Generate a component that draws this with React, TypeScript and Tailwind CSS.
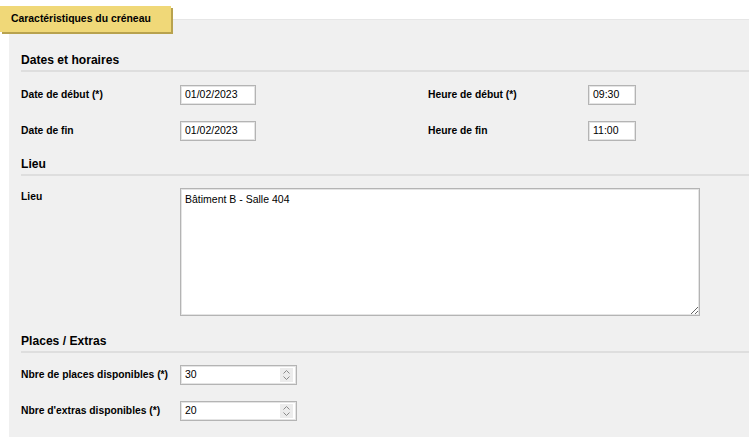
import React from "react";

const font = { fontFamily: '"Liberation Sans", Arial, sans-serif' };

function TextInput({ value, w }: { value: string; w: string }) {
  return (
    <div
      className={`${w} h-[20px] bg-white border border-[#b4b4b4] shadow-[inset_0_0_0_1px_#e4e4e4] flex items-center pl-[4px] text-[10.5px] text-black`}
    >
      {value}
    </div>
  );
}

function NumberInput({ value }: { value: string }) {
  return (
    <div className="w-[117px] h-[20px] bg-white border border-[#b4b4b4] shadow-[inset_0_0_0_1px_#e4e4e4] flex items-center pl-[4px] pr-[3px] text-[10.5px] text-black">
      <span className="flex-1">{value}</span>
      <div className="w-[13px] h-[14px] bg-[#ececec] flex items-center justify-center">
        <svg width="9" height="12" viewBox="0 0 9 12" fill="none" stroke="#8a8a8a" strokeWidth="1">
          <path d="M1.5 4.5 L4.5 1.5 L7.5 4.5" />
          <path d="M1.5 7.5 L4.5 10.5 L7.5 7.5" />
        </svg>
      </div>
    </div>
  );
}

function SectionHeader({ title, mt }: { title: string; mt: string }) {
  return (
    <div className={`${mt} border-b-2 border-[#dedede] pb-[1px]`}>
      <div className="text-[12.1px] font-bold leading-[18px] text-black">{title}</div>
    </div>
  );
}

function Label({ children, w }: { children: React.ReactNode; w: string }) {
  return <div className={`${w} shrink-0 text-[10.3px] font-bold text-black leading-[18px]`}>{children}</div>;
}

export default function App() {
  return (
    <div className="relative w-[750px] h-[440px] bg-white overflow-hidden" style={font}>
      <div className="absolute left-0 top-[6px] w-[171px] h-[26px] bg-[#f0d878] shadow-[2px_2px_0_#b8a24e] flex items-center pl-[11px] text-[10.4px] font-bold text-black z-10">
        Caractéristiques du créneau
      </div>
      <div className="ml-[9px] mt-[19px] w-[740px] h-[418px] bg-[#f0f0f0] border-t border-[#e6e6e6] pl-[12px]">
        <SectionHeader title="Dates et horaires" mt="mt-[31px]" />
        <div className="mt-[13px] flex flex-col gap-[16px]">
          <div className="flex items-center">
            <Label w="w-[159px]">Date de début (*)</Label>
            <div className="w-[248px] shrink-0">
              <TextInput value="01/02/2023" w="w-[76px]" />
            </div>
            <Label w="w-[160px]">Heure de début (*)</Label>
            <TextInput value="09:30" w="w-[48px]" />
          </div>
          <div className="flex items-center">
            <Label w="w-[159px]">Date de fin</Label>
            <div className="w-[248px] shrink-0">
              <TextInput value="01/02/2023" w="w-[76px]" />
            </div>
            <Label w="w-[160px]">Heure de fin</Label>
            <TextInput value="11:00" w="w-[48px]" />
          </div>
        </div>

        <SectionHeader title="Lieu" mt="mt-[14px]" />
        <div className="mt-[12px] flex items-start">
          <Label w="w-[159px]">Lieu</Label>
          <textarea
            defaultValue="Bâtiment B - Salle 404"
            className="w-[520px] h-[128px] bg-white border border-[#b4b4b4] shadow-[inset_0_0_0_1px_#e4e4e4] px-[4px] py-[3px] text-[10.5px] text-black leading-[14px] outline-none"
            style={font}
          />
        </div>

        <SectionHeader title="Places / Extras" mt="mt-[16px]" />
        <div className="mt-[12px] flex flex-col gap-[16px]">
          <div className="flex items-center">
            <Label w="w-[159px]">Nbre de places disponibles (*)</Label>
            <NumberInput value="30" />
          </div>
          <div className="flex items-center">
            <Label w="w-[159px]">Nbre d'extras disponibles (*)</Label>
            <NumberInput value="20" />
          </div>
        </div>
      </div>
    </div>
  );
}
